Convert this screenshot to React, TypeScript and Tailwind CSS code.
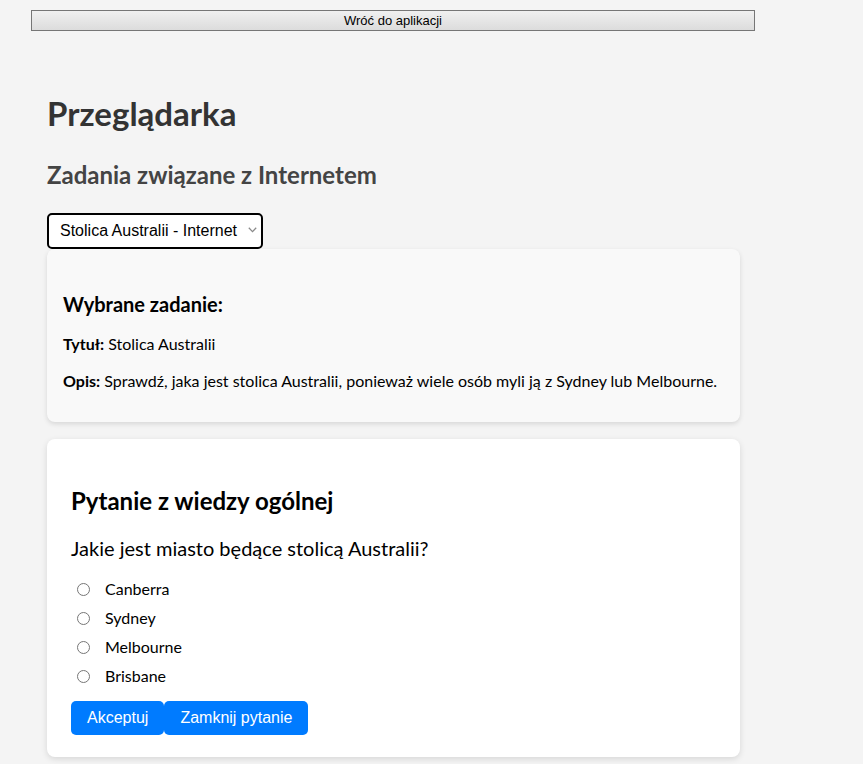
import { useState } from "react";

const tasks = [
  {
    id: "australia",
    label: "Stolica Australii - Internet",
    title: "Stolica Australii",
    desc: "Sprawdź, jaka jest stolica Australii, ponieważ wiele osób myli ją z Sydney lub Melbourne.",
  },
];

const answers = ["Canberra", "Sydney", "Melbourne", "Brisbane"];

export default function App() {
  const [taskId, setTaskId] = useState(tasks[0].id);
  const [answer, setAnswer] = useState<string | null>(null);
  const task = tasks.find((t) => t.id === taskId) ?? tasks[0];

  return (
    <div className="min-h-[764px] bg-[#f4f4f4] font-['Lato',sans-serif] text-black">
      <div className="pl-[31px] pt-[10px]">
        <button className="block h-[21px] w-[724px] border border-[#767676] bg-gradient-to-b from-[#f0f0f0] to-[#dcdcdc] font-['Liberation_Sans',Arial,sans-serif] text-[13px] leading-[19px] text-black">
          Wróć do aplikacji
        </button>
      </div>

      <div className="w-[740px] pl-[47px] pt-[62px]">
        <h1 className="text-[33px] font-bold leading-[40px] text-[#333]">Przeglądarka</h1>
        <h2 className="mt-[26px] text-[24px] font-bold leading-[32px] text-[#444]">
          Zadania związane z Internetem
        </h2>

        <div className="relative mt-[22px] w-[216px]">
          <select
            value={taskId}
            onChange={(e) => setTaskId(e.target.value)}
            className="block h-[36px] w-[216px] appearance-none rounded-[5px] border-2 border-black bg-white pl-[11px] font-['Liberation_Sans',Arial,sans-serif] text-[16px] text-black"
          >
            {tasks.map((t) => (
              <option key={t.id} value={t.id}>
                {t.label}
              </option>
            ))}
          </select>
          <svg
            className="pointer-events-none absolute right-[6px] top-[14px]"
            width="9"
            height="6"
            viewBox="0 0 9 6"
            fill="none"
          >
            <path d="M0.8 0.8L4.5 4.6L8.2 0.8" stroke="#8a8a8a" strokeWidth="1.3" />
          </svg>
        </div>

        <div className="h-[173px] rounded-lg bg-[#f9f9f9] px-4 pt-[42px] shadow-[0_2px_5px_rgba(0,0,0,0.12)]">
          <h3 className="text-[20px] font-bold leading-[26px]">Wybrane zadanie:</h3>
          <p className="mt-[15px] text-[16px] leading-[24px]">
            <strong>Tytuł:</strong> {task.title}
          </p>
          <p className="mt-[13px] text-[16px] leading-[24px]">
            <strong>Opis:</strong> {task.desc}
          </p>
        </div>

        <div className="mt-[17px] h-[318px] rounded-lg bg-white px-6 pt-[46px] shadow-[0_2px_6px_rgba(0,0,0,0.12)]">
          <h2 className="text-[24px] font-bold leading-[32px]">Pytanie z wiedzy ogólnej</h2>
          <p className="mt-[17px] text-[20px] leading-[28px]">Jakie jest miasto będące stolicą Australii?</p>
          <div className="mt-[15px] flex flex-col gap-[5px]">
            {answers.map((a) => (
              <label key={a} className="flex h-[24px] items-center text-[16px]">
                <input
                  type="radio"
                  name="answer"
                  checked={answer === a}
                  onChange={() => setAnswer(a)}
                  className="ml-[6px] mr-[15px] h-[13px] w-[13px]"
                />
                {a}
              </label>
            ))}
          </div>
          <div className="mt-[13px] flex font-['Liberation_Sans',Arial,sans-serif] text-[16px] text-white">
            <button className="h-[34px] rounded-[5px] bg-[#007bff] px-4">Akceptuj</button>
            <button className="h-[34px] rounded-[5px] bg-[#007bff] px-4">Zamknij pytanie</button>
          </div>
        </div>
      </div>
    </div>
  );
}
